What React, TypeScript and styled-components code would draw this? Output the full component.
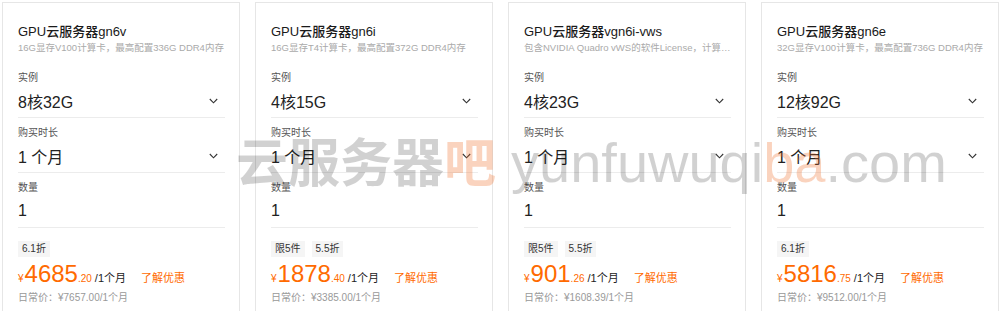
import styled, { createGlobalStyle } from 'styled-components';

type Plan = {
  title: string;
  desc: string;
  spec: string;
  tags: string[];
  price: string;
  cents: string;
  normal: string;
};

const plans: Plan[] = [
  {
    title: 'GPU云服务器gn6v',
    desc: '16G显存V100计算卡，最高配置336G DDR4内存',
    spec: '8核32G',
    tags: ['6.1折'],
    price: '4685',
    cents: '.20',
    normal: '7657.00',
  },
  {
    title: 'GPU云服务器gn6i',
    desc: '16G显存T4计算卡，最高配置372G DDR4内存',
    spec: '4核15G',
    tags: ['限5件', '5.5折'],
    price: '1878',
    cents: '.40',
    normal: '3385.00',
  },
  {
    title: 'GPU云服务器vgn6i-vws',
    desc: '包含NVIDIA Quadro vWS的软件License，计算卡T4，最高配置',
    spec: '4核23G',
    tags: ['限5件', '5.5折'],
    price: '901',
    cents: '.26',
    normal: '1608.39',
  },
  {
    title: 'GPU云服务器gn6e',
    desc: '32G显存V100计算卡，最高配置736G DDR4内存',
    spec: '12核92G',
    tags: ['6.1折'],
    price: '5816',
    cents: '.75',
    normal: '9512.00',
  },
];

const orange = '#ff6a00';

const GlobalStyle = createGlobalStyle`
  html, body {
    margin: 0;
    padding: 0;
    background: #fff;
    overflow: hidden;
  }
  body {
    font-family: "Liberation Sans", "Noto Sans CJK SC", sans-serif;
    color: #333;
  }
`;

const Page = styled.div`
  position: relative;
  width: 1000px;
  height: 311px;
  overflow: hidden;
  padding: 2px 0 0 2px;
  box-sizing: border-box;
`;

const CardRow = styled.div`
  display: flex;
  gap: 15px;
`;

const Card = styled.div`
  width: 238px;
  height: 330px;
  box-sizing: border-box;
  border: 1px solid #e6e6e6;
  padding: 20px 14px 0 15px;
  background: #fff;
`;

const Title = styled.div`
  font-size: 13px;
  line-height: 18px;
  font-weight: 500;
  color: #1a1a1a;
`;

const Desc = styled.div`
  font-size: 9.5px;
  line-height: 14px;
  color: #aaa;
  white-space: nowrap;
  overflow: hidden;
  text-overflow: ellipsis;
  margin: 0 -4px 8px 0;
`;

const Field = styled.div`
  padding: 8px 0 4px;
  border-bottom: 1px solid #ececec;
`;

const Label = styled.div`
  font-size: 10px;
  line-height: 14px;
  color: #555;
`;

const Value = styled.div`
  display: flex;
  align-items: center;
  justify-content: space-between;
  margin-top: 4px;
  height: 24px;
  font-size: 16px;
  color: #222;
  padding-right: 7px;
`;

const Tags = styled.div`
  display: flex;
  gap: 7px;
  margin-top: 13px;
`;

const Tag = styled.span`
  height: 16px;
  line-height: 16px;
  padding: 0 4px;
  font-size: 10px;
  color: #333;
  background: #f5f5f5;
`;

const PriceRow = styled.div`
  display: flex;
  align-items: baseline;
  margin-top: 3px;
  height: 28px;
  color: ${orange};
`;

const Small = styled.span<{ $dark?: boolean }>`
  font-size: 10px;
  color: ${({ $dark }) => ($dark ? '#222' : orange)};
`;

const Amount = styled.span`
  font-size: 24px;
  line-height: 28px;
  margin-left: 1px;
`;

const Unit = styled.span`
  font-size: 11px;
  color: #222;
  margin-left: 3px;
`;

const More = styled.span`
  font-size: 11px;
  color: ${orange};
  margin-left: 15px;
`;

const Normal = styled.div`
  margin-top: 3px;
  font-size: 10px;
  line-height: 14px;
  color: #999;
`;

const Watermark = styled.div`
  position: absolute;
  left: 236px;
  top: 122px;
  display: flex;
  align-items: baseline;
  pointer-events: none;
  white-space: nowrap;
`;

const MarkCn = styled.span<{ $accent?: boolean }>`
  font-family: "Noto Sans CJK SC", sans-serif;
  font-size: 52px;
  font-weight: 700;
  color: ${({ $accent }) =>
    $accent ? 'rgba(240, 110, 40, 0.3)' : 'rgba(0, 0, 0, 0.18)'};
`;

const MarkEn = styled.span<{ $accent?: boolean }>`
  font-family: "Liberation Sans", sans-serif;
  font-size: 56px;
  color: ${({ $accent }) =>
    $accent ? 'rgba(240, 110, 40, 0.3)' : 'rgba(0, 0, 0, 0.18)'};
`;

const Gap = styled.span`
  display: inline-block;
  width: 15px;
`;

const Chevron = () => (
  <svg width="9" height="6" viewBox="0 0 9 6" fill="none">
    <polyline points="0.8,1 4.5,4.8 8.2,1" stroke="#333" strokeWidth="1.1" />
  </svg>
);

const PlanCard: React.FC<{ plan: Plan }> = ({ plan }) => (
  <Card>
    <Title>{plan.title}</Title>
    <Desc>{plan.desc}</Desc>
    <Field>
      <Label>实例</Label>
      <Value>
        {plan.spec}
        <Chevron />
      </Value>
    </Field>
    <Field>
      <Label>购买时长</Label>
      <Value>
        1 个月
        <Chevron />
      </Value>
    </Field>
    <Field>
      <Label>数量</Label>
      <Value>1</Value>
    </Field>
    <Tags>
      {plan.tags.map((t) => (
        <Tag key={t}>{t}</Tag>
      ))}
    </Tags>
    <PriceRow>
      <Small>¥</Small>
      <Amount>{plan.price}</Amount>
      <Small>{plan.cents}</Small>
      <Unit>/1个月</Unit>
      <More>了解优惠</More>
    </PriceRow>
    <Normal>日常价：¥{plan.normal}/1个月</Normal>
  </Card>
);

export default function App() {
  return (
    <Page>
      <GlobalStyle />
      <CardRow>
        {plans.map((p) => (
          <PlanCard key={p.title} plan={p} />
        ))}
      </CardRow>
      <Watermark>
        <MarkCn>云服务器</MarkCn>
        <MarkCn $accent>吧</MarkCn>
        <Gap />
        <MarkEn>yunfuwuqi</MarkEn>
        <MarkEn $accent>ba</MarkEn>
        <MarkEn>.com</MarkEn>
      </Watermark>
    </Page>
  );
}
